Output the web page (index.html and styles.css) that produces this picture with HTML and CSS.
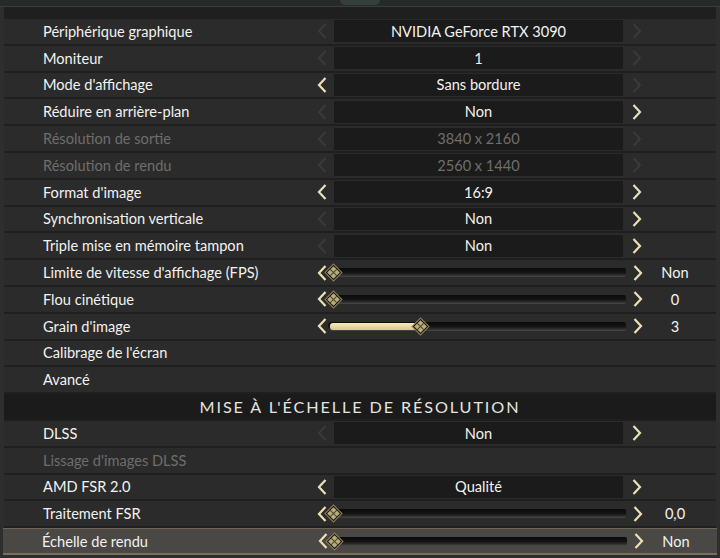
FILE: index.html
```html
<!DOCTYPE html>
<html lang="fr">
<head>
<meta charset="utf-8">
<title>Paramètres graphiques</title>
<link rel="stylesheet" href="styles.css">
</head>
<body>
<div class="screen">
  <div class="topstrip"><div class="ornament"></div></div>
  <div class="topbar"></div>
  <div class="list">
    <div class="row">
      <div class="label">Périphérique graphique</div>
      <div class="ctrl"><span class="arr left off"></span><div class="box">NVIDIA GeForce RTX 3090</div><span class="arr right off"></span></div>
      <div class="val"></div>
    </div>
    <div class="row">
      <div class="label">Moniteur</div>
      <div class="ctrl"><span class="arr left off"></span><div class="box">1</div><span class="arr right off"></span></div>
      <div class="val"></div>
    </div>
    <div class="row">
      <div class="label">Mode d'affichage</div>
      <div class="ctrl"><span class="arr left"></span><div class="box">Sans bordure</div><span class="arr right off"></span></div>
      <div class="val"></div>
    </div>
    <div class="row">
      <div class="label">Réduire en arrière-plan</div>
      <div class="ctrl"><span class="arr left off"></span><div class="box">Non</div><span class="arr right"></span></div>
      <div class="val"></div>
    </div>
    <div class="row dim">
      <div class="label">Résolution de sortie</div>
      <div class="ctrl"><span class="arr left off"></span><div class="box">3840 x 2160</div><span class="arr right off"></span></div>
      <div class="val"></div>
    </div>
    <div class="row dim">
      <div class="label">Résolution de rendu</div>
      <div class="ctrl"><span class="arr left off"></span><div class="box">2560 x 1440</div><span class="arr right off"></span></div>
      <div class="val"></div>
    </div>
    <div class="row">
      <div class="label">Format d'image</div>
      <div class="ctrl"><span class="arr left"></span><div class="box">16:9</div><span class="arr right"></span></div>
      <div class="val"></div>
    </div>
    <div class="row">
      <div class="label">Synchronisation verticale</div>
      <div class="ctrl"><span class="arr left off"></span><div class="box">Non</div><span class="arr right"></span></div>
      <div class="val"></div>
    </div>
    <div class="row">
      <div class="label">Triple mise en mémoire tampon</div>
      <div class="ctrl"><span class="arr left off"></span><div class="box">Non</div><span class="arr right"></span></div>
      <div class="val"></div>
    </div>
    <div class="row">
      <div class="label">Limite de vitesse d'affichage (FPS)</div>
      <div class="ctrl slider"><span class="arr left"></span><div class="track"><span class="knob" style="left:3px"></span></div><span class="arr right"></span></div>
      <div class="val">Non</div>
    </div>
    <div class="row">
      <div class="label">Flou cinétique</div>
      <div class="ctrl slider"><span class="arr left"></span><div class="track"><span class="knob" style="left:3px"></span></div><span class="arr right"></span></div>
      <div class="val">0</div>
    </div>
    <div class="row">
      <div class="label">Grain d'image</div>
      <div class="ctrl slider"><span class="arr left"></span><div class="track"><span class="fill" style="width:90px"></span><span class="knob" style="left:90px"></span></div><span class="arr right"></span></div>
      <div class="val">3</div>
    </div>
    <div class="row">
      <div class="label">Calibrage de l'écran</div>
    </div>
    <div class="row">
      <div class="label">Avancé</div>
    </div>
    <div class="section">MISE À L'ÉCHELLE DE RÉSOLUTION</div>
    <div class="row">
      <div class="label">DLSS</div>
      <div class="ctrl"><span class="arr left off"></span><div class="box">Non</div><span class="arr right"></span></div>
      <div class="val"></div>
    </div>
    <div class="row dim">
      <div class="label">Lissage d'images DLSS</div>
    </div>
    <div class="row">
      <div class="label">AMD FSR 2.0</div>
      <div class="ctrl"><span class="arr left"></span><div class="box">Qualité</div><span class="arr right"></span></div>
      <div class="val"></div>
    </div>
    <div class="row">
      <div class="label">Traitement FSR</div>
      <div class="ctrl slider"><span class="arr left"></span><div class="track"><span class="knob" style="left:3px"></span></div><span class="arr right"></span></div>
      <div class="val">0,0</div>
    </div>
    <div class="row selected">
      <div class="label">Échelle de rendu</div>
      <div class="ctrl slider"><span class="arr left"></span><div class="track"><span class="knob" style="left:3px"></span></div><span class="arr right"></span></div>
      <div class="val">Non</div>
    </div>
  </div>
</div>
</body>
</html>
```
FILE: styles.css
```css
* { box-sizing: border-box; }
html, body { margin: 0; padding: 0; }
body {
  width: 720px;
  height: 558px;
  overflow: hidden;
  background: #2b2d2c;
  font-family: "Lato", "Open Sans", sans-serif;
  color: #f2f2f0;
}
.screen {
  width: 720px;
  height: 558px;
  display: flex;
  flex-direction: column;
  background: #2c2f2e;
  padding: 0 4px;
}
.topstrip {
  height: 7px;
  position: relative;
  background: #262a28;
  border-bottom: 1px solid #3a3e3c;
  margin: 0 -4px;
}
.ornament {
  position: absolute;
  left: 340px;
  top: 0;
  width: 40px;
  height: 5px;
  border-radius: 0 0 20px 20px;
  background: #34403a;
}
.topbar {
  height: 12px;
  background: #1f1f1f;
}
.list {
  display: flex;
  flex-direction: column;
}
.row {
  height: 26.8px;
  display: flex;
  align-items: center;
  background: #2b2b2b;
  border-bottom: 2px solid #1f1f1f;
}
.label {
  flex: 1;
  padding-left: 39px;
  font-size: 14.6px;
  white-space: nowrap;
}
.dim .label, .dim .box { color: #6e6e6c; }
.ctrl {
  width: 332px;
  height: 22px;
  display: flex;
  align-items: center;
}
.box {
  width: 289px;
  height: 22px;
  background: #1b1b1b;
  display: flex;
  align-items: center;
  justify-content: center;
  font-size: 14.6px;
}
.arr {
  display: block;
  height: 16px;
  background-repeat: no-repeat;
  background-size: 10px 16px;
}
.arr.left {
  width: 20px;
  background-position: 3px 0;
  background-image: url("data:image/svg+xml,%3Csvg xmlns='http://www.w3.org/2000/svg' width='10' height='16' viewBox='0 0 10 16'%3E%3Cpolyline points='8.5,1 2,8 8.5,15' fill='none' stroke='%23ebe0b6' stroke-width='2.2'/%3E%3C/svg%3E");
}
.arr.right {
  width: 23px;
  background-position: 9px 0;
  background-image: url("data:image/svg+xml,%3Csvg xmlns='http://www.w3.org/2000/svg' width='10' height='16' viewBox='0 0 10 16'%3E%3Cpolyline points='1.5,1 8,8 1.5,15' fill='none' stroke='%23ebe0b6' stroke-width='2.2'/%3E%3C/svg%3E");
}
.arr.left.off {
  background-image: url("data:image/svg+xml,%3Csvg xmlns='http://www.w3.org/2000/svg' width='10' height='16' viewBox='0 0 10 16'%3E%3Cpolyline points='8.5,1 2,8 8.5,15' fill='none' stroke='%233a3a3a' stroke-width='2'/%3E%3C/svg%3E");
}
.arr.right.off {
  background-image: url("data:image/svg+xml,%3Csvg xmlns='http://www.w3.org/2000/svg' width='10' height='16' viewBox='0 0 10 16'%3E%3Cpolyline points='1.5,1 8,8 1.5,15' fill='none' stroke='%233a3a3a' stroke-width='2'/%3E%3C/svg%3E");
}
.slider .arr.left { width: 14px; background-position: 3px 0; }
.slider .arr.right { width: 20px; background-position: 7px 0; }
.track {
  width: 298px;
  height: 9px;
  position: relative;
  border-radius: 4px 2px 2px 4px;
  background: linear-gradient(#0a0a0a 0%, #141414 50%, #2a2a2a 75%, #4a4a4a 100%);
}
.fill {
  position: absolute;
  left: 2px;
  top: 1px;
  height: 7px;
  border-radius: 3px;
  background: linear-gradient(#f7ebbb, #d9c68c);
}
.knob {
  position: absolute;
  top: -1px;
  width: 11px;
  height: 11px;
  margin-left: -3px;
  transform: rotate(45deg);
  background:
    linear-gradient(#4a4530, #4a4530) center / 1px 100% no-repeat,
    linear-gradient(#4a4530, #4a4530) center / 100% 1px no-repeat,
    #b9ab7c;
  border: 1px solid #16140e;
  box-shadow: 0 0 0 1px #8b7f58;
}
.val {
  width: 70px;
  text-align: center;
  font-size: 14.6px;
  padding-right: 12px;
}
.section {
  height: 26.8px;
  background: #1b1b1b;
  display: flex;
  align-items: center;
  justify-content: center;
  font-size: 16.2px;
  letter-spacing: 1.9px;
  color: #e4e4e0;
  border-bottom: 2px solid #1f1f1f;
}
.row.selected {
  background: #4a4845;
  border-top: 1px solid #6e6458;
  border-bottom: 2px solid #7a6e5e;
  margin: 0 -1px;
}
```
